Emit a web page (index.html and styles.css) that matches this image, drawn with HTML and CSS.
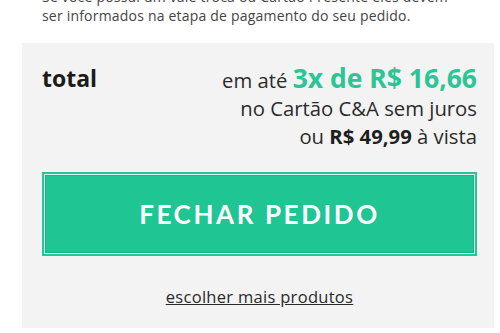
FILE: index.html
```html
<!DOCTYPE html>
<html lang="pt-BR">
<head>
<meta charset="utf-8">
<link rel="stylesheet" href="styles.css">
</head>
<body>
<div class="page">
  <p class="note">Se você possui um vale troca ou Cartão Presente eles devem<br>ser informados na etapa de pagamento do seu pedido.</p>
  <section class="summary">
    <div class="total-row">
      <div class="total-label">total</div>
      <div class="prices">
        <div class="line1">em até <strong class="green">3x de R$ 16,66</strong></div>
        <div class="line2">no Cartão C&amp;A sem juros</div>
        <div class="line3">ou <strong>R$ 49,99</strong> à vista</div>
      </div>
    </div>
    <button class="checkout" type="button">FECHAR PEDIDO</button>
    <div class="more"><a href="#" class="more-link">escolher mais produtos</a></div>
  </section>
</div>
</body>
</html>
```
FILE: styles.css
```css
html, body {
  margin: 0;
  padding: 0;
  background: #ffffff;
}
body {
  font-family: "Open Sans", "DejaVu Sans", sans-serif;
  color: #333333;
  overflow: hidden;
}
.page {
  padding: 0 6px 0 22px;
}
.note {
  margin: -12px 0 0 0;
  padding: 0 20px;
  font-size: 14px;
  letter-spacing: 0.2px;
  line-height: 18.5px;
  color: #444444;
  white-space: nowrap;
}
.summary {
  margin-top: 18px;
  background: #f3f3f4;
  padding: 20px 17px 20px 20px;
  height: 245px;
}
.total-row {
  display: flex;
  justify-content: space-between;
  align-items: flex-start;
}
.total-label {
  font-size: 23px;
  font-weight: 700;
  color: #1b1b1b;
  line-height: 30px;
}
.prices {
  text-align: right;
  font-size: 20.3px;
  line-height: 27.5px;
  color: #2b2b2b;
}
.line1 {
  line-height: 30px;
}
.green {
  color: #2cc596;
  font-size: 26.5px;
  font-weight: 700;
}
.line3 strong {
  font-weight: 700;
  color: #1e1e1e;
}
.checkout {
  display: block;
  width: 100%;
  margin-top: 22px;
  height: 84px;
  background: #1fc593;
  border: 2px solid #24c596;
  box-shadow: inset 0 0 0 1px #d9f5ec, inset 0 0 0 2px #17b585;
  color: #ffffff;
  font-family: Lato, "Open Sans", sans-serif;
  font-weight: 700;
  font-size: 26px;
  letter-spacing: 2.6px;
  cursor: pointer;
}
.more {
  margin-top: 29px;
  text-align: center;
}
.more-link {
  font-size: 16.5px;
  letter-spacing: 0.3px;
  color: #2a2a2a;
  text-decoration: underline;
}
```
